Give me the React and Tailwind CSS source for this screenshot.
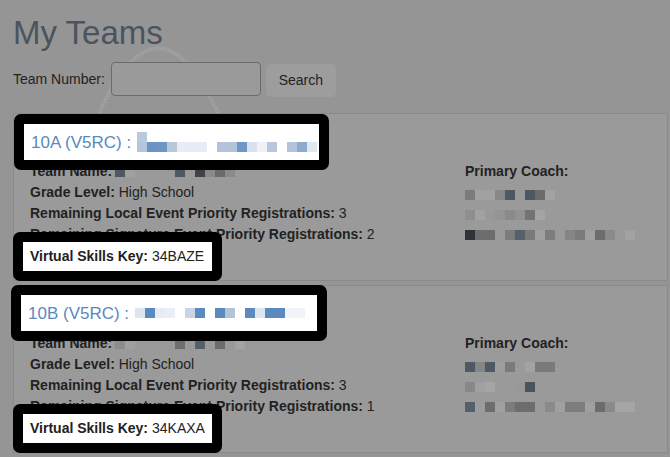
import React from "react";

const BLUE = "#5a89c0";

// pixelated redaction blocks, one entry per 10px cell ("" = gap)
const teams = [
  {
    number: "10A",
    titleRows: [
      ["#b9c9de", "", "", "", "", "", "", "", "", "", "", "", "", "", "", "", "", ""],
      ["#b4c6dc", "#6b94c4", "#6e96c5", "#b8c8dc", "#e8edf5", "#e8edf5", "#e8edf5", "", "#b3c4da", "#b3c4da", "#6f97c5", "#d9e2ee", "#eef2f7", "#b8c8dc", "", "#b3c4da", "#8cabd0", "#dfe7f1"],
    ],
    nameCells: ["#4f5862", "#a0a0a0", "", "", "", "", "#4d5863", "", "#3f4247", "#8a8a8a", "#6a6a6a", "#8a8a8a"],
    grade: "High School",
    local: 3,
    signature: 2,
    skillsKey: "34BAZE",
    coachRows: [
      ["#7b7b7b", "#a1a1a1", "#a1a1a1", "#888888", "#4d5864", "", "#4d5864", "#6c6c6c", "#a2a2a2"],
      ["#8f8f8f", "#a2a2a2", "#999999", "#949494", "#8a8a8a", "#929292", "#737373", "#a4a4a4"],
      ["#2f3339", "#6d6d6d", "#6d6d6d", "", "#7c7c7c", "#56606b", "#7a7a7a", "#a0a0a0", "#7d7d7d", "", "#858585", "#7a7a7a", "#a0a0a0", "#6c6c6c", "#8a8a8a", "", "#a2a2a2"],
    ],
  },
  {
    number: "10B",
    titleRows: [
      ["#dde5ef", "#5b8ac0", "#e6ecf4", "#eaeff6", "", "#c7d5e6", "#5b8ac0", "", "#5b8ac0", "#b3c3d8", "", "#5b8ac0", "#dde6f0", "#5b8ac0", "#5b8ac0", "#f0f3f8", "#f0f3f8"],
    ],
    nameCells: ["#8c8c8c", "#a0a0a0", "", "", "", "", "#6e6e6e", "", "#56606b", "", "#6c6c6c", "", "#a3a3a3"],
    grade: "High School",
    local: 3,
    signature: 1,
    skillsKey: "34KAXA",
    coachRows: [
      ["#4f5964", "#858585", "#4f5964", "#9d9d9d", "#7a7a7a", "", "#a3a3a3", "#7a7a7a", "#7a7a7a"],
      ["#888888", "#a0a0a0", "#a5a5a5", "#9a9a9a", "#9a9a9a", "#989898", "#4b535d", ""],
      ["#56606b", "#9c9c9c", "#6d6d6d", "#a0a0a0", "#7c7c7c", "#6d6d6d", "#6d6d6d", "#9a9a9a", "#8a8a8a", "#a0a0a0", "#7d7d7d", "#7d7d7d", "#a0a0a0", "#6c6c6c", "#8a8a8a", "#a5a5a5", "#a5a5a5"],
    ],
  },
];

function Mosaic({ cells }) {
  return (
    <span className="inline-flex h-[10px] align-middle">
      {cells.map((c, i) => (
        <span key={i} className="w-[10px] h-[10px]" style={{ backgroundColor: c || "transparent" }} />
      ))}
    </span>
  );
}

function Callout({ className, children }) {
  return (
    <div className={`absolute z-[5] border-[10px] border-black rounded-[7px] bg-white ${className}`}>
      {children}
    </div>
  );
}

function TeamCard({ team, headerCallout }) {
  return (
    <div className="relative bg-[#9a9a9a] border border-[#8a8a8a]">
      {/* Header (highlighted) */}
      <Callout className={headerCallout}>
        <div className="h-full flex items-center pl-[7px]">
          <span className="text-[17px] leading-none" style={{ color: BLUE }}>
            {team.number} (V5RC) :
          </span>
          <span className="ml-[6px] flex flex-col">
            {team.titleRows.map((row, i) => (
              <Mosaic key={i} cells={row} />
            ))}
          </span>
        </div>
      </Callout>
      <div className="h-[47px]" />

      {/* Body */}
      <div className="flex text-[14px] leading-[21px] text-[#222]">
        <div className="w-[451px] pl-[16px]">
          <div className="flex items-center">
            <span className="font-bold">Team Name:</span>
            <span className="ml-[3px] flex">
              <Mosaic cells={team.nameCells} />
            </span>
          </div>
          <div>
            <span className="font-bold">Grade Level:</span> {team.grade}
          </div>
          <div>
            <span className="font-bold">Remaining Local Event Priority Registrations:</span> {team.local}
          </div>
          <div>
            <span className="font-bold">Remaining Signature Event Priority Registrations:</span> {team.signature}
          </div>
          <div className="h-[21px]" />
        </div>
        <div className="flex-1">
          <div className="font-bold">Primary Coach:</div>
          <div className="flex flex-col gap-[10px] pt-[8px]">
            {team.coachRows.map((row, i) => (
              <div key={i} className="flex">
                <Mosaic cells={row} />
              </div>
            ))}
          </div>
        </div>
      </div>
      <div className="h-[14px]" />

      {/* Skills key (highlighted) */}
      <Callout className="left-[-1px] bottom-[-1px] w-[209px] h-[49px]">
        <div className="h-full flex items-center pl-[7px] text-[14px] text-[#222]">
          <span className="font-bold">Virtual Skills Key:</span>
          <span className="ml-[4px]">{team.skillsKey}</span>
        </div>
      </Callout>
    </div>
  );
}

export default function App() {
  return (
    <div
      className="relative min-h-screen bg-[#959595] pl-[13px] pr-[2px] overflow-hidden"
      style={{ fontFamily: '"Liberation Sans", Arial, sans-serif' }}
    >
      {/* faint watermark arch */}
      <svg className="absolute left-0 top-0 pointer-events-none" width="260" height="120">
        <path d="M95 122 Q158 -25 222 122" fill="none" stroke="#a2a2a2" strokeWidth="4" strokeDasharray="2 1" />
      </svg>

      <h1 className="relative pt-[13px] text-[33px] leading-[40px] font-medium text-[#4a545e]">My Teams</h1>

      <div className="relative flex items-center mt-[8px] text-[14px] text-[#222]">
        <label className="mr-[6px]">Team Number:</label>
        <input className="w-[150px] h-[34px] border border-[#6b6b6b] rounded-[4px] bg-[#9a9a9a] outline-none" />
        <button className="ml-[5px] mt-[3px] w-[70px] h-[33px] rounded-[5px] bg-[#9d9d9d] text-[14px]">
          Search
        </button>
      </div>

      <div className="mt-[16px] flex flex-col gap-[4px]">
        <TeamCard team={teams[0]} headerCallout="left-[0px] top-[0px] w-[315px] h-[56px]" />
        <TeamCard team={teams[1]} headerCallout="left-[-3px] top-[-1px] w-[316px] h-[56px]" />
      </div>
    </div>
  );
}
